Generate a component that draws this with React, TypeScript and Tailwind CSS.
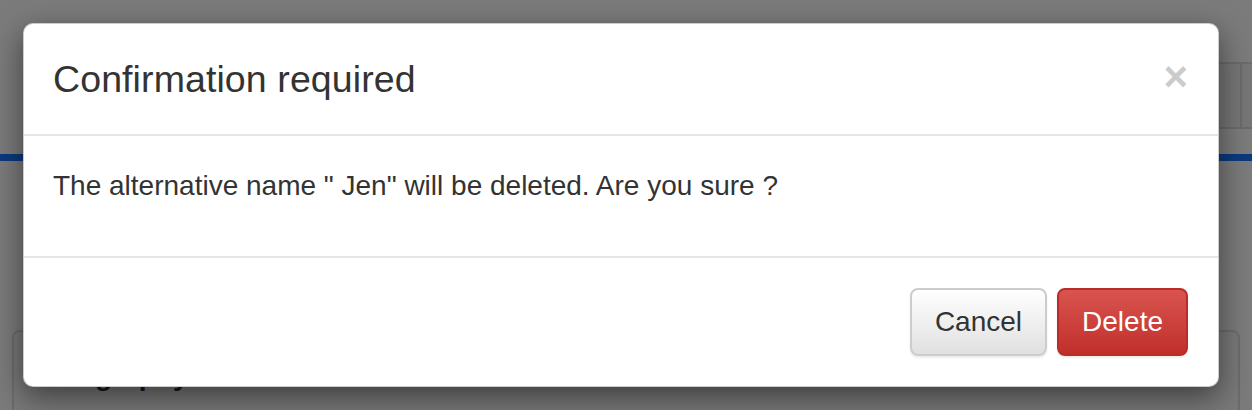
import React from "react";

const font = { fontFamily: '"Liberation Sans", Arial, Helvetica, sans-serif' };

function PageBehind() {
  return (
    <div className="h-[410px] w-full overflow-hidden bg-[#f6f6f6]">
      <div className="h-[62px]" />
      <div className="flex justify-end">
        <div className="flex h-[67px] w-[320px] border-y-2 border-[#d6d6d6] bg-[#ececec]">
          <div className="flex-1 border-r-2 border-[#d6d6d6]" />
          <div className="w-[10px]" />
        </div>
      </div>
      <div className="h-[25px]" />
      <div className="h-[7px] bg-[#1474fc]" />
      <div className="h-[169px]" />
      <div className="mx-[12px] rounded-t-[8px] border-2 border-[#d8d8d8] bg-[#f3f3f3]">
        <div className="border-b-2 border-[#d8d8d8] px-[36px] pb-[14px] pt-[24px] text-[28px] font-bold leading-[40px] text-[#333]">
          Biography
        </div>
      </div>
    </div>
  );
}

export default function App() {
  return (
    <div className="relative h-[410px] w-[1252px] overflow-hidden" style={font}>
      <PageBehind />
      <div className="absolute inset-0 bg-black/50">
        <div className="ml-[23px] mt-[23px] w-[1196px] rounded-[10px] border border-black/20 bg-white shadow-[0_10px_30px_rgba(0,0,0,0.5)]">
          <div className="flex items-start justify-between border-b-2 border-[#e5e5e5] p-[30px]">
            <h4 className="-ml-[1px] text-[37.5px] font-normal leading-[50px] tracking-[0.1px] text-[#333]">
              Confirmation required
            </h4>
            <button className="mt-[2px] text-[42px] font-bold leading-none text-black opacity-20">×</button>
          </div>
          <div className="p-[30px]">
            <p className="-ml-[1px] mb-[20px] text-[28px] leading-[40px] text-[#333]">
              The alternative name " Jen" will be deleted. Are you sure ?
            </p>
          </div>
          <div className="flex justify-end gap-[10px] border-t-2 border-[#e5e5e5] p-[30px]">
            <button className="h-[68px] rounded-[8px] border-2 border-[#cccccc] bg-gradient-to-b from-white to-[#e0e0e0] px-[23px] text-[28px] leading-[40px] text-[#333] shadow-[0_2px_2px_rgba(0,0,0,0.075)]">
              Cancel
            </button>
            <button className="h-[68px] rounded-[8px] border-2 border-[#b92c28] bg-gradient-to-b from-[#d9534f] to-[#c12e2a] px-[23px] text-[28px] leading-[40px] text-white shadow-[0_2px_2px_rgba(0,0,0,0.075)]">
              Delete
            </button>
          </div>
        </div>
      </div>
    </div>
  );
}
